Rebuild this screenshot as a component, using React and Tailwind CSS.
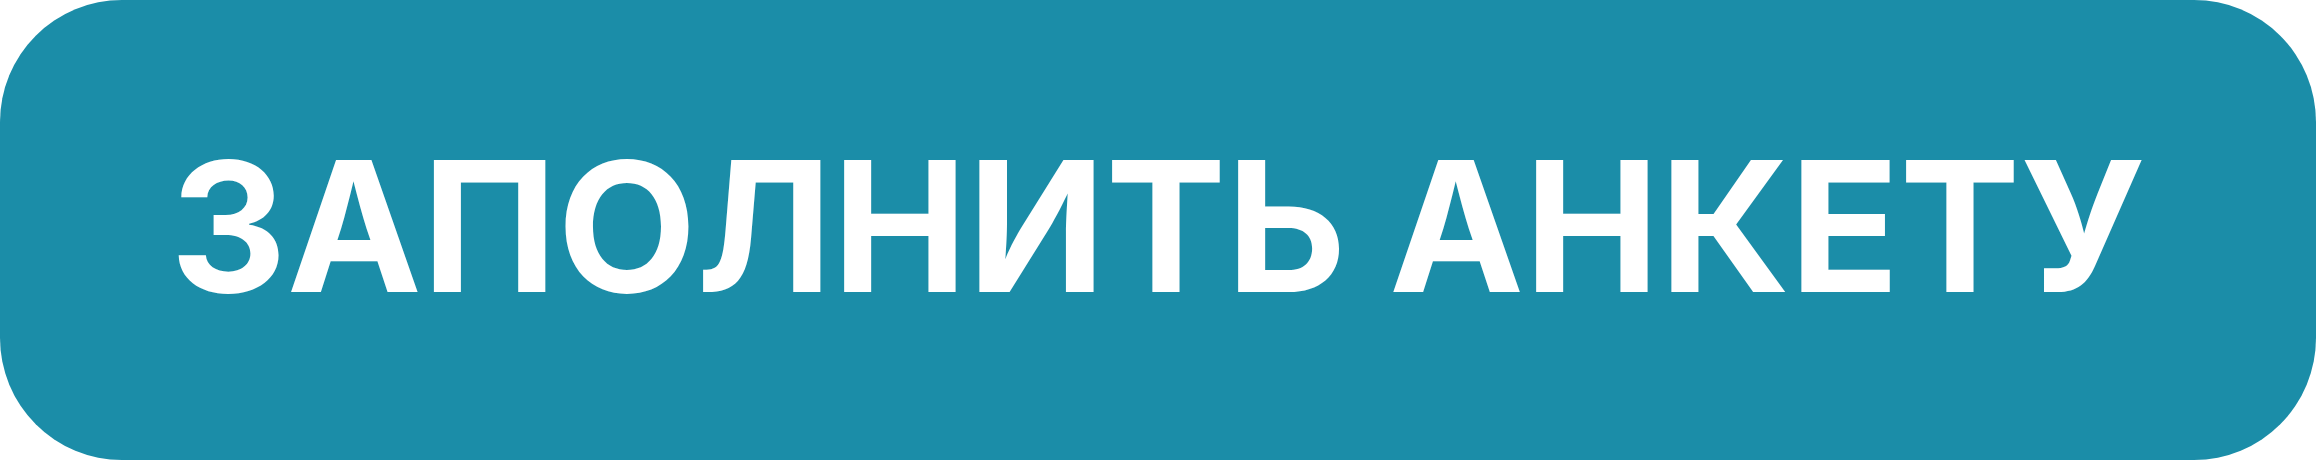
export default function App() {
  return (
    <div className="w-[2316px] h-[460px]">
      <button
        type="button"
        className="w-full h-full rounded-[122px] bg-[#1b8da8] flex items-center justify-center pb-2 text-white font-bold text-[181px] leading-none"
        style={{ fontFamily: "Inter, 'Noto Sans', sans-serif" }}
      >
        ЗАПОЛНИТЬ АНКЕТУ
      </button>
    </div>
  );
}
